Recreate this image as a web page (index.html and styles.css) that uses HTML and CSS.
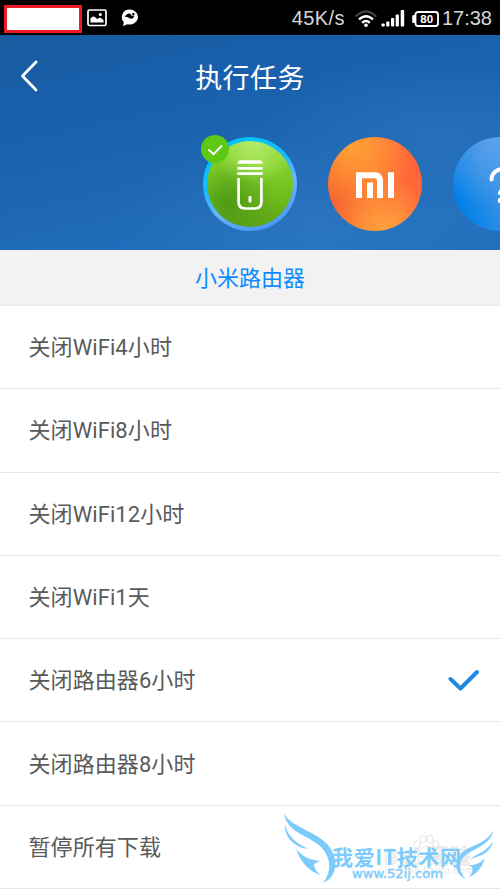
FILE: index.html
```html
<!DOCTYPE html>
<html lang="zh-CN">
<head>
<meta charset="utf-8">
<title>执行任务</title>
<link rel="stylesheet" href="styles.css">
</head>
<body>
<div class="status">
  <span class="redacted"></span>
  <svg class="picture" width="20" height="18" viewBox="0 0 20 18"><rect x="1" y="1" width="18" height="15.500" rx="1.500" fill="none" stroke="#fff" stroke-width="1.700"/><path d="M3.500 13.500V9.500Q6 6 8.500 8.500L10 10L13 8.500L16.500 11V13.500Z" fill="#fff"/><circle cx="13.300" cy="5.500" r="1.500" fill="#fff"/></svg>
  <svg class="chat" width="18" height="18" viewBox="0 0 18 18"><path d="M9 .5a8.200 7.500 0 1 1-2.500 14.700L2 17l.8-4A7.500 7.500 0 0 1 9 .5Z" fill="#fff"/><path d="M3.500 8Q6 4 9 4.500L11 7L13.500 7.200Q11.500 10.500 9 9.500Q6 7 3.500 8Z" fill="#000"/><circle cx="12.300" cy="5.300" r="1.200" fill="#000"/></svg>
  <span class="speed">45K/s</span>
  <svg class="wifi" width="22" height="18" viewBox="0 0 22 18" fill="none" stroke-width="2"><path d="M.8 6.500Q11-3.500 21.200 6.500" stroke="#4a4a4a"/><path d="M4 9.500Q11 2.800 18 9.500M7.200 12.800Q11 9 14.800 12.800" stroke="#fff" stroke-width="2.400"/><circle cx="11" cy="15.300" r="1.800" fill="#fff"/></svg>
  <svg class="signal" width="24" height="17" viewBox="0 0 24 17" fill="#fff"><rect x=".5" y="13.500" width="3.200" height="3" rx=".8"/><rect x="5.200" y="11.500" width="3.200" height="5" rx=".8"/><rect x="10" y="8" width="3.200" height="8.500" rx=".8"/><rect x="14.700" y="4.500" width="3.200" height="12" rx=".8"/><rect x="19.700" y="0" width="3.500" height="16.500" rx=".8"/></svg>
  <svg class="battery" width="27" height="16" viewBox="0 0 27 16"><rect x="3.500" y="1" width="22.500" height="14" rx="2.500" fill="none" stroke="#fff" stroke-width="1.800"/><path d="M3 4H1.500Q.2 4 .2 5.500V10.500Q.2 12 1.500 12H3Z" fill="#fff"/><text x="14.700" y="12" text-anchor="middle" textLength="13" class="level">80</text></svg>
  <span class="clock">17:38</span>
</div>
<header class="header">
  <div class="titlebar">
    <svg class="back" width="22" height="34" viewBox="0 0 22 34"><path d="M18 3L4.500 17L18 31" fill="none" stroke="#fff" stroke-width="2.800" stroke-linecap="round" stroke-linejoin="round"/></svg>
    <h1>执行任务</h1>
  </div>
  <div class="devices">
    <div class="device ring">
      <div class="device-face green">
        <svg width="26" height="50" viewBox="0 0 26 50"><path d="M.3 3.700Q.6.300 4 .300H22Q25.400.300 25.700 3.700ZM.3 7H25.700V9.700H.3ZM.3 12.300H25.700V15H.3Z" fill="#fff"/><path d="M1.600 18V42Q1.600 48.500 8 48.500H18Q24.400 48.500 24.400 42V18" fill="none" stroke="#fff" stroke-width="2.700"/><rect x="11.500" y="36" width="3" height="6.500" rx="1" fill="#fff"/></svg>
      </div>
      <span class="badge"><svg width="28" height="28" viewBox="0 0 28 28"><path d="M8 15L12.500 19.200L20.500 11" fill="none" stroke="#fff" stroke-width="1.900" stroke-linecap="round"/></svg></span>
    </div>
    <div class="device orange">
      <svg width="38" height="26" viewBox="0 0 38 26" fill="none" stroke="#fff" stroke-width="6"><path d="M3 26V3.200H18.500Q24 3.200 24 9V26M14 26V10.500M35 26V.2"/></svg>
    </div>
    <div class="device blue">
      <svg width="30" height="38" viewBox="0 0 30 38"><path d="M2.500 12.500C2.500-1.500 27.500-1.500 27.500 11C27.500 18 14 17 11 26" fill="none" stroke="#fff" stroke-width="4" stroke-linecap="round"/><circle cx="11.500" cy="33.500" r="2.800" fill="#fff"/></svg>
    </div>
  </div>
</header>
<h2 class="section">小米路由器</h2>
<ul class="tasks">
  <li>关闭WiFi4小时</li>
  <li>关闭WiFi8小时</li>
  <li>关闭WiFi12小时</li>
  <li>关闭WiFi1天</li>
  <li>关闭路由器6小时<svg class="selected" width="32" height="24" viewBox="0 0 32 24"><path d="M2.500 11L12.500 20.500L29 4" fill="none" stroke="#2088e0" stroke-width="4" stroke-linecap="round" stroke-linejoin="round"/></svg></li>
  <li>关闭路由器8小时</li>
  <li>暂停所有下载</li>
</ul>
<svg class="watermark" width="230" height="89" viewBox="0 0 230 89">
  <g class="faint">
    <ellipse cx="147" cy="45" rx="3" ry="4"/><ellipse cx="153" cy="39" rx="3" ry="4"/><ellipse cx="160" cy="39" rx="3" ry="4"/><ellipse cx="166" cy="45" rx="3" ry="4"/><path d="M156.500 46Q161 46 164 52Q167 58 156.500 57Q146 58 149 52Q152 46 156.500 46Z"/>
    <text x="114" y="64" textLength="86" class="faint-name">Bai 经验</text>
    <text x="115" y="74" textLength="88" class="faint-site">jingyan.baidu.com</text>
  </g>
  <g class="wings">
    <path d="M14 13C20 27 46 31 58 45C70 60 67 77 53 83C62 72 61 58 52 48C40 35 17 34 14 13Z"/>
    <path d="M15 24C18 38 27 43 38 49C25 47 14 38 15 24Z"/>
    <path d="M26 49C33 57 40 60 50 61L44 64Q44 69 50 75C39 71 31 63 26 49Z"/>
    <path d="M224 30C220 43 211 46 202 51C188 57 187 70 196 79C184 74 183 60 194 51C205 44 216 43 224 30Z"/>
    <path d="M223 41C220 54 210 56 200 59C208 53 217 52 223 41Z"/>
    <path d="M215 58C211 69 207 74 199 77Q204 71 202 67L198 65C205 66 210 63 215 58Z"/>
    <text x="62" y="64.500" textLength="129" class="wm-name">我爱IT技术网</text>
    <text x="82" y="78" textLength="91" lengthAdjust="spacingAndGlyphs" class="wm-site">www.52ij.com</text>
  </g>
</svg>
</body>
</html>
```

FILE: styles.css
```css
* { box-sizing: border-box; }
body {
  margin: 0;
  width: 500px;
  height: 889px;
  overflow: hidden;
  position: relative;
  background: #fff;
  font-family: Roboto, "Noto Sans CJK SC", sans-serif;
}
svg { display: block; flex: none; }
.status {
  height: 35px;
  background: #000;
  display: flex;
  align-items: center;
  padding: 2px 8px 0 4px;
  color: #d8d8d8;
}
.redacted {
  width: 78px;
  height: 28px;
  border: 3px solid #ed1c24;
  background: #fff;
  margin-top: 1px;
}
.picture { margin-left: 5px; margin-top: -2px; }
.chat { margin-left: 14px; margin-top: -2px; }
.speed {
  margin-left: auto;
  font: 20px "Liberation Sans", sans-serif;
  letter-spacing: .4px;
}
.wifi { margin-left: 10px; }
.signal { margin-left: 4px; }
.battery { margin-left: 7px; }
.level { font: bold 11.500px "Liberation Sans", sans-serif; fill: #fff; }
.clock {
  margin-left: 3px;
  font: 20px "Liberation Sans", sans-serif;
}
.header {
  height: 215px;
  background:
    radial-gradient(ellipse 170px 70px at 430px 95px, rgba(60, 130, 195, .3), transparent),
    radial-gradient(ellipse 200px 90px at 310px 185px, rgba(55, 125, 195, .4), transparent),
    linear-gradient(168deg, #185b9f 0%, #195fab 25%, #1d66b2 55%, #2370be 85%, #246fba 100%);
  overflow: hidden;
}
.titlebar {
  display: grid;
  grid-template-columns: 60px 1fr 60px;
  align-items: center;
  height: 84px;
}
.back { margin-left: 18px; margin-top: -2px; }
h1 {
  margin: -2px 0 0;
  text-align: center;
  color: #fff;
  font-size: 27px;
  font-weight: 400;
  letter-spacing: .4px;
}
.devices {
  display: flex;
  gap: 31px;
  padding: 18px 0 0 203px;
}
.device {
  flex: none;
  width: 94px;
  height: 94px;
  border-radius: 50%;
  display: flex;
  align-items: center;
  justify-content: center;
}
.ring {
  position: relative;
  background: linear-gradient(155deg, #00c3ff 20%, #16b9ff 40%, #69b5f8 60%, #4896ff 90%);
}
.device-face {
  width: 86px;
  height: 86px;
  border-radius: 50%;
  display: flex;
  align-items: center;
  justify-content: center;
}
.green {
  background:
    radial-gradient(circle at 55% 0, rgba(210, 245, 145, .65), transparent 45%),
    radial-gradient(circle at 25% 70%, rgba(70, 145, 20, .8), transparent 55%),
    linear-gradient(170deg, #86d62d 30%, #72bf1d 65%, #5c9f18);
}
.green svg { margin-top: 2px; }
.badge {
  position: absolute;
  left: -2px;
  top: -2px;
  width: 28px;
  height: 28px;
  border-radius: 50%;
  background: #5ec815;
}
.orange {
  background:
    radial-gradient(circle at 60% 105%, #ffa43c, transparent 50%),
    radial-gradient(circle at 25% 10%, #ffa035, transparent 55%),
    linear-gradient(80deg, #f35d2d, #ff7b38 50%, #ff6039);
}
.orange svg { margin-top: 2px; }
.blue {
  background:
    radial-gradient(circle at 45% 5%, #5a9fea, transparent 65%),
    linear-gradient(75deg, #0080e8 10%, #529be5 70%);
}
.blue svg { margin-left: 7px; margin-top: 3px; }
.section {
  margin: 0;
  height: 56px;
  line-height: 57px;
  background: #f2f2f2;
  border-bottom: 1px solid #e8e8e8;
  color: #0d8bff;
  text-align: center;
  font-size: 22px;
  font-weight: 400;
}
.tasks { margin: 0; padding: 0; list-style: none; }
.tasks li {
  height: 83.300px;
  border-bottom: 1px solid #e8e8e8;
  padding: 0 20px 4px 28.500px;
  display: flex;
  align-items: center;
  font-size: 22px;
  letter-spacing: .08px;
  color: #5a5a5a;
}
.selected { margin: 4px 0 0 auto; }
.watermark {
  position: absolute;
  left: 270px;
  top: 800px;
}
.faint { fill: none; stroke: #e3e3e3; stroke-width: 1; }
.faint-name { font: bold 20px "Noto Sans CJK SC", sans-serif; }
.faint-site { font: 10px "Liberation Sans", sans-serif; fill: #e9e9e9; stroke: none; }
.wings { fill: #7ccbfb; }
.wm-name { font: bold 21px "Noto Sans CJK SC", sans-serif; }
.wm-site { font: 13px "DejaVu Sans", sans-serif; stroke: #7ccbfb; stroke-width: .4; }
```
